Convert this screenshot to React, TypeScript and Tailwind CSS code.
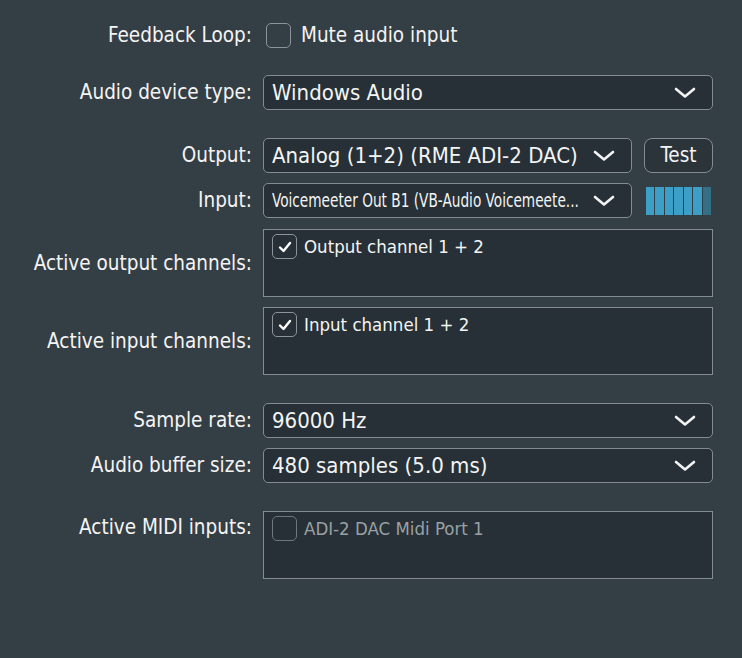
const Chevron = () => (
  <svg width="22" height="12" viewBox="0 0 22 12" fill="none" className="shrink-0">
    <path d="M2 2 L11 9.5 L20 2" stroke="#f2f2f2" strokeWidth="2.6" strokeLinecap="round" strokeLinejoin="round" />
  </svg>
);

const Check = ({ checked, dim }: { checked?: boolean; dim?: boolean }) => (
  <div
    className={`flex h-[25px] w-[25px] shrink-0 items-center justify-center rounded-[5px] border-[1.5px] ${
      dim ? "border-[#6f777c]" : "border-[#8d9499]"
    }`}
  >
    {checked && (
      <svg width="14" height="12" viewBox="0 0 14 12" fill="none">
        <path d="M2 6.5 L5.5 10 L12 2" stroke="#ffffff" strokeWidth="2.4" strokeLinecap="round" strokeLinejoin="round" />
      </svg>
    )}
  </div>
);

const Combo = ({ text, small, className }: { text: string; small?: boolean; className?: string }) => (
  <div
    className={`flex h-[35px] items-center rounded-[5px] border border-[#858c91] bg-[#263036] pl-[8px] pr-[16px] ${className ?? ""}`}
  >
    <div className="min-w-0 flex-1">
      <span
        className={`inline-block origin-left whitespace-nowrap ${small ? "scale-x-[0.8] text-[19px]" : "text-[22px]"}`}
      >
        {text}
      </span>
    </div>
    <Chevron />
  </div>
);

const Label = ({ children }: { children: string }) => (
  <div className="w-[253px] shrink-0 pr-[1px] text-right text-[20.5px] whitespace-nowrap">{children}</div>
);

const ListBox = ({ item, checked, dim }: { item: string; checked?: boolean; dim?: boolean }) => (
  <div className="h-[68px] w-[450px] border border-[#858c91] bg-[#263036] px-[8px] pt-[3px]">
    <div className="flex items-center gap-[7px]">
      <Check checked={checked} dim={dim} />
      <span className={`text-[18.5px] ${dim ? "text-[#9aa1a5]" : ""}`}>{item}</span>
    </div>
  </div>
);

export default function App() {
  return (
    <div
      className="h-[658px] w-[742px] bg-[#343e45] pt-[23px] text-[#f4f4f4]"
      style={{ fontFamily: '"DejaVu Sans Condensed", "DejaVu Sans", "Liberation Sans", sans-serif', fontStretch: "condensed" }}
    >
      <div className="flex h-[25px] items-center gap-[10px]">
        <Label>Feedback Loop:</Label>
        <div className="flex items-center gap-[10px] pl-[3px]">
          <Check />
          <span className="text-[20.5px]">Mute audio input</span>
        </div>
      </div>

      <div className="mt-[27px] flex items-center gap-[10px]">
        <Label>Audio device type:</Label>
        <Combo text="Windows Audio" className="w-[450px]" />
      </div>

      <div className="mt-[28px] flex items-center gap-[10px]">
        <Label>Output:</Label>
        <Combo text="Analog (1+2) (RME ADI-2 DAC)" className="w-[369px]" />
        <div className="ml-[2px] flex h-[35px] w-[69px] items-center justify-center rounded-[8px] border border-[#858c91] bg-[#2a3439] text-[20.5px]">
          Test
        </div>
      </div>

      <div className="mt-[10px] flex items-center gap-[10px]">
        <Label>Input:</Label>
        <Combo text="Voicemeeter Out B1 (VB-Audio Voicemeete..." small className="w-[369px]" />
        <div className="ml-[4px] flex h-[28px] w-[65px] gap-[1px]">
          <div className="flex-1 bg-[#3b9fc7]" />
          <div className="flex-1 bg-[#3b9fc7]" />
          <div className="flex-1 bg-[#3b9fc7]" />
          <div className="flex-1 bg-[#3b9fc7]" />
          <div className="flex-1 bg-[#3b9fc7]" />
          <div className="flex-1 bg-[#3b9fc7]" />
          <div className="flex-1 bg-[#356f86]" />
        </div>
      </div>

      <div className="mt-[11px] flex items-center gap-[10px]">
        <Label>Active output channels:</Label>
        <ListBox item="Output channel 1 + 2" checked />
      </div>

      <div className="mt-[10px] flex items-center gap-[10px]">
        <Label>Active input channels:</Label>
        <ListBox item="Input channel 1 + 2" checked />
      </div>

      <div className="mt-[28px] flex items-center gap-[10px]">
        <Label>Sample rate:</Label>
        <Combo text="96000 Hz" className="w-[450px]" />
      </div>

      <div className="mt-[10px] flex items-center gap-[10px]">
        <Label>Audio buffer size:</Label>
        <Combo text="480 samples (5.0 ms)" className="w-[450px]" />
      </div>

      <div className="mt-[28px] flex items-start gap-[10px]">
        <div className="pt-[1px]">
          <Label>Active MIDI inputs:</Label>
        </div>
        <ListBox item="ADI-2 DAC Midi Port 1" dim />
      </div>
    </div>
  );
}
